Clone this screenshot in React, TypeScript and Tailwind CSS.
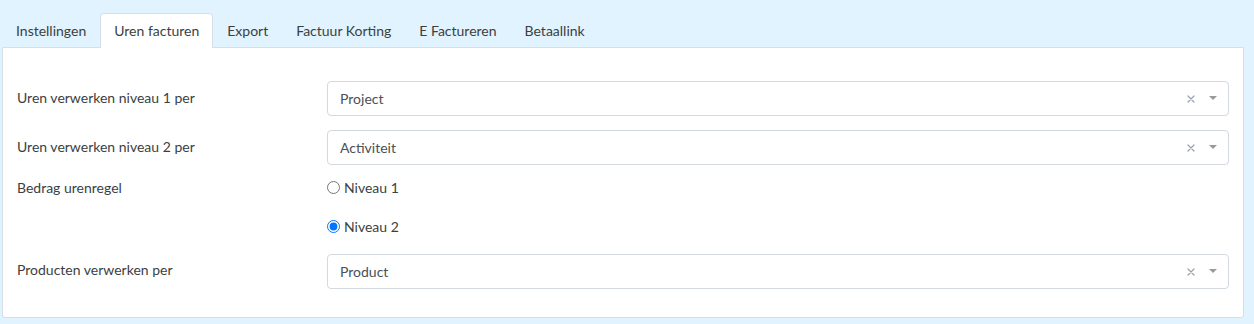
import React from "react";

function SelectBox({ value }: { value: string }) {
  return (
    <div className="flex-1 h-[35px] border border-[#d3d9de] rounded-[4px] bg-white flex items-center pl-[12px] pr-[10px]">
      <span className="flex-1 text-[14px] text-[#495057] leading-[20px]">{value}</span>
      <span className="w-[14px] h-[14px] flex items-center justify-center mr-[10px]">
        <svg width="8" height="8" viewBox="0 0 8 8">
          <path d="M1 1 L7 7 M7 1 L1 7" stroke="#9aa4ad" strokeWidth="1.3" strokeLinecap="round" />
        </svg>
      </span>
      <span className="w-[10px] h-[10px] flex items-center justify-center">
        <svg width="8" height="5" viewBox="0 0 8 5">
          <path d="M0 0 L8 0 L4 4 Z" fill="#999" />
        </svg>
      </span>
    </div>
  );
}

export default function App() {
  const tabs = ["Instellingen", "Uren facturen", "Export", "Factuur Korting", "E Factureren", "Betaallink"];
  return (
    <div
      className="w-[1254px] h-[324px] bg-[#e1f3fe] pt-[13px] pl-[2px] pr-[10px] pb-[6px] flex flex-col"
      style={{ fontFamily: "Lato, 'Noto Sans', sans-serif" }}
    >
      <div className="flex h-[34px] relative z-10">
        {tabs.map((t, i) =>
          i === 1 ? (
            <div
              key={t}
              className="px-[13px] h-[35px] pb-[1px] bg-white border border-b-0 border-[#d5dfe6] rounded-t-[4px] flex items-center text-[14px] text-[#3a3f44]"
            >
              {t}
            </div>
          ) : (
            <div key={t} className="px-[13px] h-[34px] flex items-center text-[14px] text-[#3a3f44] border border-transparent">
              {t}
            </div>
          )
        )}
      </div>
      <div className="flex-1 bg-white border border-[#d5dfe6] rounded-b-[3px] px-[14px] pt-[33px] pb-[28px] text-[14px] text-[#3a3f44]">
        <div className="flex">
          <div className="w-[310px] pt-[6px] leading-[21px]">Uren verwerken niveau 1 per</div>
          <SelectBox value="Project" />
        </div>
        <div className="flex mt-[14px]">
          <div className="w-[310px] pt-[6px] leading-[21px]">Uren verwerken niveau 2 per</div>
          <SelectBox value="Activiteit" />
        </div>
        <div className="flex mt-[5px]">
          <div className="w-[310px] pt-[7px] leading-[21px]">Bedrag urenregel</div>
          <div className="flex flex-col pt-[7px]">
            <label className="flex items-center gap-[4px] leading-[21px]">
              <input type="radio" name="bedrag" className="m-0 w-[13px] h-[13px]" />
              <span>Niveau 1</span>
            </label>
            <label className="flex items-center gap-[4px] leading-[21px] mt-[18px]">
              <input type="radio" name="bedrag" defaultChecked className="m-0 w-[13px] h-[13px]" />
              <span>Niveau 2</span>
            </label>
          </div>
        </div>
        <div className="flex mt-[17px]">
          <div className="w-[310px] pt-[5px] leading-[21px]">Producten verwerken per</div>
          <SelectBox value="Product" />
        </div>
      </div>
    </div>
  );
}
